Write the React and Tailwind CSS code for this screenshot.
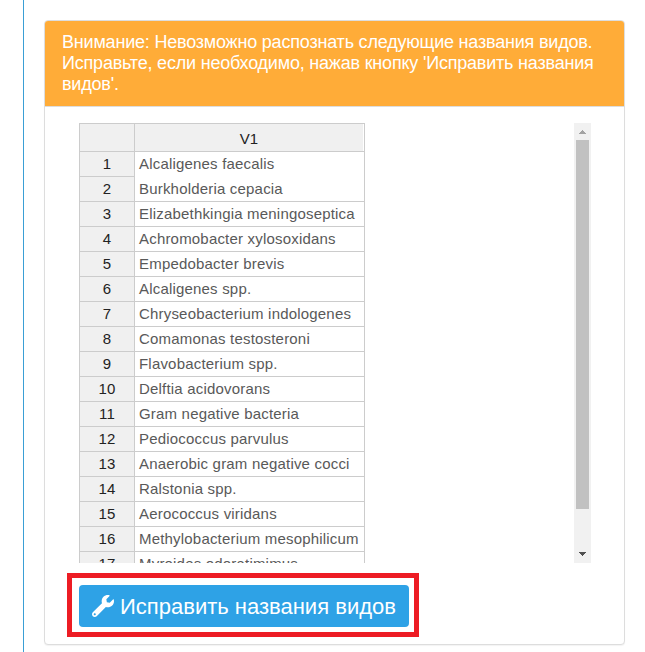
import React from "react";

const species = [
  "Alcaligenes faecalis",
  "Burkholderia cepacia",
  "Elizabethkingia meningoseptica",
  "Achromobacter xylosoxidans",
  "Empedobacter brevis",
  "Alcaligenes spp.",
  "Chryseobacterium indologenes",
  "Comamonas testosteroni",
  "Flavobacterium spp.",
  "Delftia acidovorans",
  "Gram negative bacteria",
  "Pediococcus parvulus",
  "Anaerobic gram negative cocci",
  "Ralstonia spp.",
  "Aerococcus viridans",
  "Methylobacterium mesophilicum",
  "Myroides odoratimimus",
];

function SpeciesTable() {
  return (
    <div className="h-[440px] w-[286px] overflow-hidden border-t border-l border-[#ccc] text-[15px] leading-[24px] tracking-[0.19px]">
      <div className="flex h-[28px] text-center text-[#222]">
        <div className="w-[55px] shrink-0 border-r border-b border-[#ccc] bg-[#f0f0f0]" />
        <div className="flex-1 border-r border-b border-[#ccc] pr-px">
          <div className="h-full bg-[#f0f0f0] pt-[3px]">V1</div>
        </div>
      </div>
      {species.map((name, i) => (
        <div key={name} className="flex h-[25px]">
          <div className="w-[54px] shrink-0 border-b border-[#ccc] bg-[#f0f0f0] text-center text-[#222]">
            {i + 1}
          </div>
          <div
            className={
              "flex-1 border-r border-l border-[#ccc] bg-white pl-1 whitespace-nowrap text-[#595959] " +
              (i === 0 ? "" : "border-b")
            }
          >
            {name}
          </div>
        </div>
      ))}
    </div>
  );
}

function Scrollbar() {
  return (
    <div className="flex h-[440px] w-[17px] flex-col items-center bg-[#f1f1f1]">
      <svg className="h-[17px] w-[17px] shrink-0" viewBox="0 0 17 17" shapeRendering="crispEdges">
        <path d="M8 7h1v1h1v1h1v1h1v1H5v-1h1V9h1V8h1z" fill="#a3a3a3" />
      </svg>
      <div className="h-[369px] w-[13px] bg-[#c1c1c1]" />
      <div className="flex-1" />
      <svg className="h-[17px] w-[17px] shrink-0" viewBox="0 0 17 17" shapeRendering="crispEdges">
        <path d="M5 6h7v1h-1v1h-1v1H9v1H8V9H7V8H6V7H5z" fill="#505050" />
      </svg>
    </div>
  );
}

export default function App() {
  return (
    <div className="flex h-[652px] w-[645px] overflow-hidden bg-white font-['Liberation_Sans',Arial,sans-serif]">
      <div className="ml-[23px] w-px shrink-0 bg-[#3a9fd5]" />
      <div className="mt-[20px] ml-[20px] flex h-[625px] w-[581px] shrink-0 flex-col overflow-hidden rounded border border-[#ddd] bg-white shadow-[0_1px_1px_rgba(0,0,0,0.05)]">
        <div className="h-[86px] shrink-0 border-b border-[#ddd] bg-[#ffac38] pt-[11px] pl-[17px] text-[18px] leading-[21px] tracking-[-0.2px] whitespace-nowrap text-white">
          <div>Внимание: Невозможно распознать следующие названия видов.</div>
          <div>Исправьте, если необходимо, нажав кнопку 'Исправить названия</div>
          <div>видов'.</div>
        </div>
        <div className="mt-4 ml-[34px] flex w-[512px] justify-between">
          <SpeciesTable />
          <Scrollbar />
        </div>
        <div className="mt-[10px] ml-[22px] h-[64px] w-[352px] border-[5px] border-[#ed1c24] px-[7px] pt-[7px]">
          <button className="flex h-[42px] w-[330px] items-center rounded bg-[#2ea2e6] pl-[13px] text-[22px] whitespace-nowrap text-white">
            <svg className="h-[22px] w-[22px] shrink-0" viewBox="0 0 512 512" fill="white">
              <path d="M507.73 109.1c-2.24-9.03-13.54-12.09-20.12-5.51l-74.36 74.36-67.88-11.31-11.31-67.88 74.36-74.36c6.62-6.62 3.43-17.9-5.66-20.16-47.38-11.74-99.55.91-136.58 37.93-39.64 39.64-50.55 97.1-34.05 147.2L18.74 402.76c-24.99 24.99-24.99 65.51 0 90.5 24.99 24.99 65.51 24.99 90.5 0l213.21-213.21c50.12 16.71 107.47 5.68 147.37-34.22 37.07-37.07 49.7-89.32 37.91-136.73zM64 472c-13.25 0-24-10.75-24-24 0-13.26 10.75-24 24-24s24 10.74 24 24c0 13.25-10.75 24-24 24z" />
            </svg>
            <span className="ml-[6px]">Исправить названия видов</span>
          </button>
        </div>
      </div>
    </div>
  );
}
